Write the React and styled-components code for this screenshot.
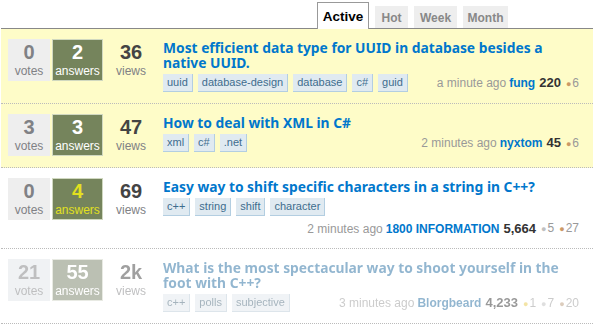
import React from 'react';
import styled, { createGlobalStyle, css } from 'styled-components';

const GlobalStyle = createGlobalStyle`
  body {
    margin: 0;
    background: #fff;
    font-family: "Liberation Sans", Arial, sans-serif;
  }
`;

const Page = styled.div`
  width: 592px;
  padding-left: 1px;
`;

const TabBar = styled.div`
  display: flex;
  justify-content: flex-end;
  align-items: flex-end;
  gap: 6px;
  height: 28px;
  padding-right: 85px;
  border-bottom: 1px solid #888;
`;

const Tab = styled.div`
  font-size: ${(p) => (p.$active ? '13.5px' : '12px')};
  font-weight: bold;
  color: ${(p) => (p.$active ? '#000' : '#888')};
  background: ${(p) => (p.$active ? '#fff' : '#eee')};
  border: ${(p) => (p.$active ? '1px solid #999' : 'none')};
  border-bottom: none;
  height: ${(p) => (p.$active ? '27px' : '22px')};
  margin-bottom: ${(p) => (p.$active ? '-1px' : '0')};
  width: ${(p) => p.$w}px;
  display: flex;
  align-items: center;
  justify-content: center;
  box-sizing: border-box;
  padding-top: ${(p) => (p.$active ? '0' : '2px')};
`;

const Row = styled.div`
  display: flex;
  padding: 10px 0 11px 7px;
  background: ${(p) => (p.$highlight ? '#fefcc8' : '#fff')};
  border-bottom: 1px dotted #bbb;
`;

const faded = css`
  ${(p) => p.$faded && 'opacity: 0.5; filter: grayscale(0.4);'}
`;

const Stats = styled.div`
  display: flex;
  gap: 2px;
  flex: 0 0 auto;
  align-self: flex-start;
  ${faded}
`;

const StatBox = styled.div`
  width: ${(p) => p.$w}px;
  height: 42px;
  display: flex;
  flex-direction: column;
  align-items: center;
  justify-content: center;
  background: ${(p) => p.$bg || 'transparent'};
  color: ${(p) => p.$color || '#808185'};
  border: ${(p) => (p.$bordered ? '1px solid #d0d8c0' : 'none')};
  box-sizing: border-box;
`;

const Num = styled.div`
  font-size: 20px;
  font-weight: bold;
  line-height: 19px;
  color: ${(p) => p.$color || 'inherit'};
`;

const Label = styled.div`
  font-size: 12px;
  line-height: 14px;
  margin-top: 2px;
`;

const Summary = styled.div`
  flex: 1;
  margin-left: 6px;
  padding-right: 14px;
  ${faded}
`;

const Title = styled.a`
  display: block;
  font-family: "Noto Sans", "DejaVu Sans", sans-serif;
  font-weight: bold;
  font-size: 13.8px;
  line-height: 15px;
  color: #0077cc;
  text-decoration: none;
  margin-top: 1px;
  max-width: 415px;
`;

const Bottom = styled.div`
  display: flex;
  flex-wrap: wrap;
  align-items: center;
  margin-top: 4px;
  row-gap: 4px;
  line-height: 16px;
`;

const Tags = styled.div`
  display: flex;
  gap: 5px;
`;

const Tag = styled.span`
  font-size: 11px;
  color: #3e6d8e;
  background: #e0eaf1;
  border-bottom: 1px solid #b3cee1;
  border-right: 1px solid #b3cee1;
  padding: 2px 4px;
  line-height: 13px;
`;

const Meta = styled.div`
  margin-left: auto;
  font-size: 12px;
  color: #999;
  white-space: nowrap;
  display: flex;
  align-items: center;
  gap: 3px;
`;

const User = styled.span`
  color: #0077cc;
  font-weight: bold;
`;

const Rep = styled.span`
  color: #333;
  font-weight: bold;
  font-size: 13px;
  margin-left: 1px;
`;

const Badge = styled.span`
  color: #999;
  margin-left: 2px;
  &::before {
    content: '●';
    color: ${(p) => p.$c};
    font-size: 9px;
    margin-right: 1px;
  }
`;

const BADGE = { gold: '#ffcc00', silver: '#c0c0c0', bronze: '#cc9966' };

const questions = [
  {
    votes: 0,
    answers: 2,
    views: '36',
    title: 'Most efficient data type for UUID in database besides a native UUID.',
    tags: ['uuid', 'database-design', 'database', 'c#', 'guid'],
    time: 'a minute ago',
    user: 'fung',
    rep: '220',
    badges: [['bronze', 6]],
    highlight: true,
  },
  {
    votes: 3,
    answers: 3,
    views: '47',
    title: 'How to deal with XML in C#',
    tags: ['xml', 'c#', '.net'],
    time: '2 minutes ago',
    user: 'nyxtom',
    rep: '45',
    badges: [['bronze', 6]],
    highlight: true,
  },
  {
    votes: 0,
    answers: 4,
    views: '69',
    title: 'Easy way to shift specific characters in a string in C++?',
    tags: ['c++', 'string', 'shift', 'character'],
    time: '2 minutes ago',
    user: '1800 INFORMATION',
    rep: '5,664',
    badges: [['silver', 5], ['bronze', 27]],
    accepted: true,
  },
  {
    votes: 21,
    answers: 55,
    views: '2k',
    title: 'What is the most spectacular way to shoot yourself in the foot with C++?',
    tags: ['c++', 'polls', 'subjective'],
    time: '3 minutes ago',
    user: 'Blorgbeard',
    rep: '4,233',
    badges: [['gold', 1], ['silver', 7], ['bronze', 20]],
    faded: true,
  },
];

function Question({ q }) {
  return (
    <Row $highlight={q.highlight}>
      <Stats $faded={q.faded}>
        <StatBox $w={42} $bg={q.faded ? '#dfe7ee' : '#eee'}>
          <Num>{q.votes}</Num>
          <Label>votes</Label>
        </StatBox>
        <StatBox $w={51} $bg="#75845c" $color={q.accepted ? '#e2e020' : '#fff'} $bordered>
          <Num>{q.answers}</Num>
          <Label>answers</Label>
        </StatBox>
        <StatBox $w={52}>
          <Num $color="#444">{q.views}</Num>
          <Label>views</Label>
        </StatBox>
      </Stats>
      <Summary $faded={q.faded}>
        <Title href="#">{q.title}</Title>
        <Bottom>
          <Tags>
            {q.tags.map((t) => (
              <Tag key={t}>{t}</Tag>
            ))}
          </Tags>
          <Meta>
            <span>{q.time}</span>
            <User>{q.user}</User>
            <Rep>{q.rep}</Rep>
            {q.badges.map(([kind, n]) => (
              <Badge key={kind} $c={BADGE[kind]}>
                {n}
              </Badge>
            ))}
          </Meta>
        </Bottom>
      </Summary>
    </Row>
  );
}

export default function App() {
  return (
    <Page>
      <GlobalStyle />
      <TabBar>
        <Tab $active $w={52}>Active</Tab>
        <Tab $w={33}>Hot</Tab>
        <Tab $w={43}>Week</Tab>
        <Tab $w={45}>Month</Tab>
      </TabBar>
      {questions.map((q) => (
        <Question key={q.title} q={q} />
      ))}
    </Page>
  );
}
